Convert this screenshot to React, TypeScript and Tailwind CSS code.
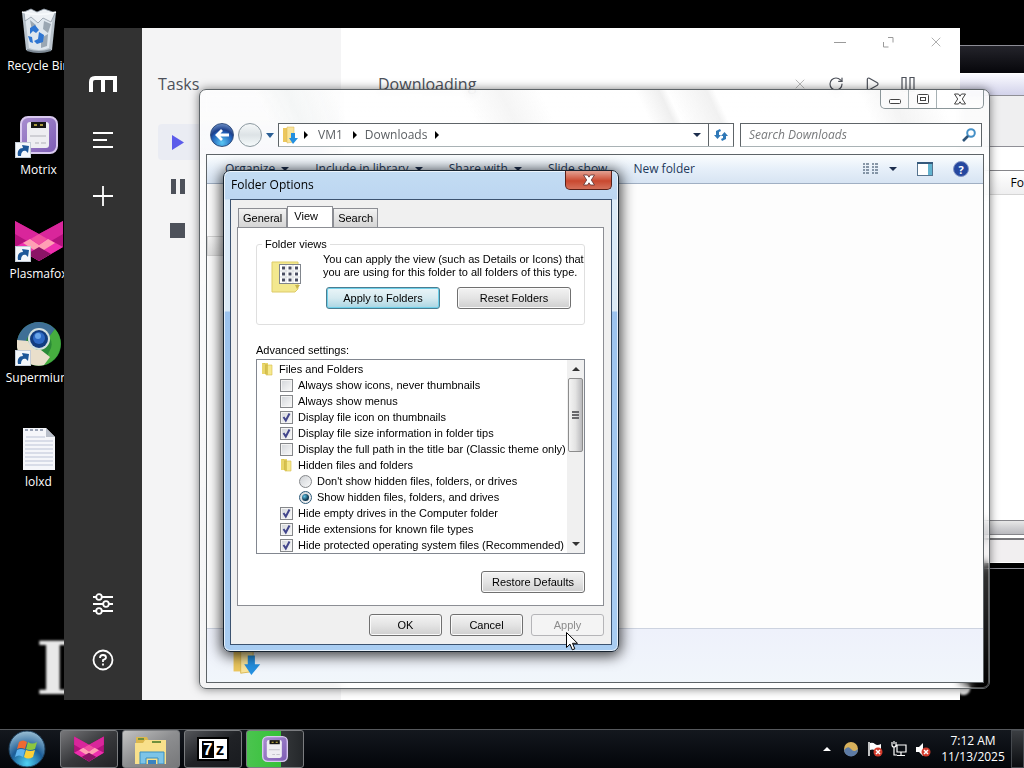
import { useState } from "react";
import type { ReactNode } from "react";
import { Play, RotateCw, X } from "lucide-react";

function ShortcutArrow() {
  return (
    <svg viewBox="0 0 16 16" className="absolute bottom-0 left-[15px] w-4 h-4">
      <rect x="0.5" y="0.5" width="15" height="15" fill="#f4f7fb" stroke="#c5cdd8" />
      <path d="M3 14C2 9 4 6 8 6L7 3l7 1-1 7-2-2C8 8 6 10 6 14z" fill="#1d5799" />
    </svg>
  );
}

function BinIcon() {
  return (
    <svg viewBox="0 0 38 46" className="w-[38px] h-[46px]">
      <path d="M2 4 6 42q13 5 26 0l4-38z" fill="#b9c3cc" />
      <path d="M5 8 9 40q10 4 20 0l4-32z" fill="#dfe7ee" />
      <path d="M4 4 11 1l6 3 7-3 6 2 5 2-4 9-8-4-5 5-7-6-6 4z" fill="#edf1f5" stroke="#8f9ba6" strokeWidth="0.8" />
      <path d="m24 13 7 3-3 9-5-4zM10 12l6 5-4 6zM21 30l7-4-1 12-6 2z" fill="#9aa7b3" />
      <path d="m10 20 5-3 4 5-3 3-3-2-3 3zM19 24l5 3-1 7-6 2-3-3 4-2zM8 28l4 1 1 6-3-1z" fill="#2f76d2" />
      <path d="M2 4q17 5 34 0" fill="none" stroke="#f7fafc" strokeWidth="1.5" />
      <path d="M7 42q12 4 24 0" fill="none" stroke="#7d8994" strokeWidth="2" />
    </svg>
  );
}

function MotrixIcon({ className }: { className: string }) {
  return (
    <svg viewBox="0 0 38 38" className={className}>
      <defs>
        <linearGradient id="mx" x1="0" y1="0" x2="1" y2="1">
          <stop offset="0" stopColor="#a98fd0" />
          <stop offset="1" stopColor="#7d5cb4" />
        </linearGradient>
      </defs>
      <rect x="1" y="1" width="36" height="36" rx="7" fill="url(#mx)" stroke="#d9c9ef" strokeWidth="2" />
      <rect x="7" y="6" width="22" height="26" rx="3" fill="#eeeef2" />
      <rect x="11" y="6" width="15" height="6" fill="#151515" />
      <path d="M14 9h3M20 9h3" stroke="#d9c34a" strokeWidth="1.5" />
      <path d="M10 20h16M15 27h4M21 27h5" stroke="#c5c5cc" strokeWidth="1.5" />
    </svg>
  );
}

function FoxIcon({ className }: { className: string }) {
  return (
    <svg viewBox="0 0 48 42" className={className}>
      <path d="M0 1 24 14 48 1v26L24 41 0 27z" fill="#b3127d" />
      <path d="M0 1 24 14 12 21 0 14zM48 1 24 14l12 7 12-7z" fill="#d9269b" />
      <path d="M0 27 24 14l24 13-24 14z" fill="#ee2fae" />
      <path d="m8 23 7-4 9 6 9-6 7 4-16 10z" fill="#ff9fb4" />
      <path d="m16 19 8-5 8 5-8 6z" fill="#f0509f" />
      <path d="M12 34 24 27l12 7-12 7z" fill="#8b1466" />
    </svg>
  );
}

function SupermiumIcon() {
  return (
    <svg viewBox="0 0 44 44" className="w-11 h-11">
      <circle cx="22" cy="22" r="22" fill="#2b8a37" />
      <path d="M0 20A22 22 0 0 1 38 7L32 15a13 13 0 0 0-23 4z" fill="#3f6f96" />
      <path d="M38 7a22 22 0 0 1-11 36l5-13a12 12 0 0 0 0-15z" fill="#46ad3f" />
      <path d="M0 18A22 22 0 0 0 27 43l6-8-9-7q-8 1-13-9z" fill="#e9dfcb" />
      <circle cx="22" cy="17" r="11" fill="#d4e0df" />
      <circle cx="22" cy="17" r="9" fill="#123c80" />
      <circle cx="22" cy="16" r="6" fill="#2d68c4" />
      <circle cx="21" cy="14" r="3" fill="#6aa5ea" />
    </svg>
  );
}

function TextFileIcon() {
  return (
    <svg viewBox="0 0 32 42" className="w-8 h-[42px]">
      <path d="M0 0h23l9 9v33H0z" fill="#f5f6fa" />
      <path d="M3 9h19M2 13h28M2 17h28M2 21h28M2 25h28M2 29h28M2 33h28M2 37h28" stroke="#bcc3d6" strokeWidth="1" />
      <path d="M23 0v9h9z" fill="#b9bfca" />
      <path d="M2 2h19" stroke="#9aa3b5" strokeWidth="2" strokeDasharray="3 2" />
    </svg>
  );
}

function DesktopIcon({ label, shortcut, children }: { label: string; shortcut?: boolean; children: ReactNode }) {
  return (
    <button className="w-[77px] h-[104px] flex flex-col items-center">
      <span className="relative w-full h-[50px] flex justify-center items-end">
        {children}
        {shortcut && <ShortcutArrow />}
      </span>
      <span className="pt-1 text-[12px] leading-[16px] text-white whitespace-nowrap">{label}</span>
    </button>
  );
}

function FolderGlyph({ className }: { className: string }) {
  return (
    <svg viewBox="0 0 12 14" className={className}>
      <path d="M1 1h6v11H1z" fill="#e9d66c" />
      <path d="M5 3h6v10H5z" fill="#f6e98e" stroke="#d6bd4c" strokeWidth="0.6" />
      <path d="M1 1h3v11l3 1V3z" fill="#cdb640" opacity="0.7" />
    </svg>
  );
}

function DownloadFolder({ className }: { className: string }) {
  return (
    <svg viewBox="0 0 16 18" className={className}>
      <path d="M1 2h8v14H1z" fill="#ecc75e" />
      <path d="M5 1h7v15l-7 1z" fill="#f9e49b" stroke="#d9b44d" strokeWidth="0.5" />
      <path d="M9 7h4v5h3l-5 6-4-6h2z" fill="#2590e0" />
    </svg>
  );
}

function Caret() {
  return <span className="w-0 h-0 border-x-4 border-x-transparent border-t-4 border-t-[#1c2d4d]" />;
}

function BackgroundWindow() {
  return (
    <section className="absolute left-[66%] right-0 top-[45px] h-[524px] flex flex-col border border-r-0 border-[#8d8d95] bg-[#08080c]">
      <div className="h-[27px] bg-linear-to-b from-[#24242b] to-[#07070b]" />
      <div className="h-[22px] border-t border-white bg-linear-to-b from-[#fafaff] to-[#d2d2ea]" />
      <div className="h-[52px] border-y border-[#8f8f96] bg-[#efeff0]" />
      <div className="h-6 bg-white border-b border-[#85858a]" />
      <div className="h-6 flex justify-end items-center bg-linear-to-b from-white to-[#efeff0] border-b border-[#d5d5d5] text-[12px] text-black">
        <span>Fo</span>
      </div>
      <div className="flex-1 bg-white" />
      <div className="h-[14px] border-t border-[#85858a] bg-linear-to-b from-[#e8e8e8] to-[#b9b9be]" />
      <div className="h-1 border-t border-[#85858a] bg-white" />
      <div className="h-6 border-t-2 border-[#77777b] bg-[#f1eff0]" />
      <div className="h-[6px] bg-black border-t border-white" />
    </section>
  );
}

function MotrixWindow() {
  return (
    <section className="absolute left-16 right-16 top-7 bottom-[29px] flex bg-white">
      <aside className="w-[78px] shrink-0 flex flex-col items-center justify-between pt-[46px] pb-7 bg-[#323232] text-white">
        <div className="flex flex-col items-center gap-8">
          <svg viewBox="0 0 28 16" className="w-7 h-[22px]" fill="none" stroke="white" strokeWidth="4">
            <path d="M2 15V5q0-4 4-4h20v14M14 1v14" />
          </svg>
          <button aria-label="Tasks" className="w-6 h-6">
            <svg viewBox="0 0 24 24" fill="none" stroke="currentColor" strokeWidth="1.8"><path d="M2 5h20M2 12h14M2 19h20" /></svg>
          </button>
          <button aria-label="Add task" className="w-6 h-6">
            <svg viewBox="0 0 24 24" fill="none" stroke="currentColor" strokeWidth="1.8"><path d="M12 2v20M2 12h20" /></svg>
          </button>
        </div>
        <div className="flex flex-col items-center gap-8">
          <button aria-label="Preferences" className="w-6 h-6">
            <svg viewBox="0 0 24 24" fill="none" stroke="currentColor" strokeWidth="1.8">
              <path d="M2 5h3M11 5h11M2 12h10M18 12h4M2 19h3M11 19h11" />
              <circle cx="8" cy="5" r="2.8" />
              <circle cx="15" cy="12" r="2.8" />
              <circle cx="8" cy="19" r="2.8" />
            </svg>
          </button>
          <button aria-label="Help" className="w-6 h-6">
            <svg viewBox="0 0 24 24" fill="none" stroke="currentColor" strokeWidth="1.8">
              <circle cx="12" cy="12" r="9.5" />
              <path d="M9 10q0-3 3-3t3 2.5Q15 11 12 12v2M12 15.500v2" />
            </svg>
          </button>
        </div>
      </aside>
      <nav className="w-[199px] shrink-0 px-4 pt-11 bg-[#f4f4f5] text-[#4d515a]">
        <h2 className="text-[16px] leading-6">Tasks</h2>
        <ul className="mt-7 flex flex-col gap-2">
          <li className="flex">
            <button aria-label="Downloading" className="w-full h-9 px-2 rounded bg-[#eaecf3] text-[#5b5bea]">
              <svg viewBox="0 0 24 24" className="w-6 h-6" fill="currentColor"><path d="M6 5v15l12-7.500z" /></svg>
            </button>
          </li>
          <li className="flex">
            <button aria-label="Waiting" className="w-full h-9 px-2">
              <svg viewBox="0 0 24 24" className="w-6 h-6" fill="currentColor"><path d="M5 5h5v15H5zM14 5h5v15h-5z" /></svg>
            </button>
          </li>
          <li className="flex">
            <button aria-label="Stopped" className="w-full h-9 px-2">
              <svg viewBox="0 0 24 24" className="w-6 h-6" fill="currentColor"><path d="M4 5h15v15H4z" /></svg>
            </button>
          </li>
        </ul>
      </nav>
      <main className="flex-1 text-[#4d515a]">
        <div className="h-7 flex justify-end text-[#9a9a9a]">
          <button aria-label="Minimize" className="w-12 flex justify-center items-center">
            <svg viewBox="0 0 12 12" className="w-3 h-3" stroke="currentColor"><path d="M0 6.500h12" /></svg>
          </button>
          <button aria-label="Maximize" className="w-12 flex justify-center items-center">
            <svg viewBox="0 0 12 12" className="w-3 h-3" stroke="currentColor" fill="none"><path d="M6 1.500h5v5M1.500 6v5h5" /></svg>
          </button>
          <button aria-label="Close" className="w-12 flex justify-center items-center">
            <X size={16} strokeWidth={1.2} />
          </button>
        </div>
        <div className="h-14 pl-[37px] pr-11 flex items-center justify-between">
          <h1 className="text-[16px] leading-6">Downloading</h1>
          <div className="flex gap-5">
            <button aria-label="Delete"><X size={16} strokeWidth={1.2} className="text-[#aaaaaa]" /></button>
            <button aria-label="Refresh"><RotateCw size={16} strokeWidth={1.8} /></button>
            <button aria-label="Resume all"><Play size={16} strokeWidth={1.8} /></button>
            <button aria-label="Pause all">
              <svg viewBox="0 0 16 16" className="w-4 h-4" fill="none" stroke="currentColor" strokeWidth="1.2"><path d="M2 1.500h4v14H2zM10 1.500h4v14h-4z" /></svg>
            </button>
          </div>
        </div>
      </main>
    </section>
  );
}

const commands = [
  { label: "Organize", menu: true },
  { label: "Include in library", menu: true },
  { label: "Share with", menu: true },
  { label: "Slide show", menu: false },
  { label: "New folder", menu: false },
];

function ExplorerWindow() {
  return (
    <section className="absolute left-[199px] right-[34px] top-[89px] bottom-10 pl-[6px] pr-[5px] pb-[5px] flex flex-col rounded-[7px] border border-[#5e6468] bg-linear-to-b from-white/75 via-white/50 to-white/0 backdrop-blur-[4px] shadow-[0_0_10px_rgba(0,0,0,0.5),inset_0_0_0_1px_rgba(255,255,255,0.3)]">
      <div className="h-[33px] shrink-0 flex justify-end items-start bg-[linear-gradient(65deg,transparent_8%,#f4f6f6_12%,transparent_18%,transparent_34%,#f5f5f5_39%,transparent_44%,transparent_56%,#efefef_59%,transparent_60%,#f1f1f1_65%,transparent_66%,transparent_84%,#f4f4f4_88%,transparent_94%)]">
        <div className="flex h-[19px] rounded-b-[5px] border border-t-0 border-[#8b9699] bg-white/40">
          <button aria-label="Minimize" className="w-7 flex justify-center items-center border-r border-[#a6b0b3]">
            <svg viewBox="0 0 12 12" className="w-3 h-3" fill="white" stroke="#444"><rect x="0.500" y="6.500" width="11" height="4" rx="1" /></svg>
          </button>
          <button aria-label="Maximize" className="w-7 flex justify-center items-center border-r border-[#a6b0b3]">
            <svg viewBox="0 0 12 12" className="w-3 h-3" fill="white" stroke="#444"><rect x="0.500" y="1.500" width="11" height="9" rx="1" /><rect x="3.500" y="4.500" width="5" height="3" /></svg>
          </button>
          <button aria-label="Close" className="w-[46px] flex justify-center items-center">
            <svg viewBox="0 0 14 12" className="w-[14px] h-3" fill="white" stroke="#444"><path d="M1.500 1h4L7 3.200 8.500 1h4L9.300 6l3.200 5h-4L7 8.800 5.500 11h-4l3.200-5z" /></svg>
          </button>
        </div>
      </div>
      <div className="h-[31px] shrink-0 flex items-start pl-1 pr-[2px]">
        <button aria-label="Back" className="w-6 h-6 rounded-full border border-[#324f7d] bg-[radial-gradient(circle_at_50%_85%,#59c8f5,#1f5bb5_50%,#1c3f8a_60%,#8fb2e3)] flex justify-center items-center">
          <svg viewBox="0 0 16 16" className="w-4 h-4" stroke="white" strokeWidth="2.800" fill="none"><path d="M15 8H3M8 3 3 8l5 5" /></svg>
        </button>
        <button aria-label="Forward" className="ml-1 w-6 h-6 rounded-full border border-[#8b989f] bg-linear-to-b from-[#f5f8f9] via-[#dde3e6] to-[#f5fafb]" />
        <button aria-label="Recent pages" className="w-4 h-6 flex justify-center items-center">
          <span className="w-0 h-0 border-x-4 border-x-transparent border-t-[5px] border-t-[#2b5f95]" />
        </button>
        <div className="flex-1 h-6 flex items-center bg-white/90 border border-[#5e6468] border-b-[#a9b2b5] text-[12px] text-[#5b5f63]">
          <DownloadFolder className="w-4 h-[18px] ml-[3px]" />
          <span className="ml-[6px] w-0 h-0 border-y-4 border-y-transparent border-l-4 border-l-black" />
          <a href="#vm1" className="ml-[10px]">VM1</a>
          <span className="ml-[10px] w-0 h-0 border-y-4 border-y-transparent border-l-4 border-l-black" />
          <a href="#downloads" className="ml-2">Downloads</a>
          <span className="ml-2 w-0 h-0 border-y-4 border-y-transparent border-l-4 border-l-black" />
          <button aria-label="Previous locations" className="ml-auto w-6 h-full flex justify-center items-center border-r border-[#5e6468]"><Caret /></button>
          <button aria-label="Refresh" className="w-6 h-full flex justify-center items-center">
            <svg viewBox="0 0 16 16" className="w-4 h-4" fill="#2f78b7">
              <path d="M7 2 3 4v4H1l3.500 4L8 8H6V5l2-1zM9 14l4-2V9h2l-3.500-4L8 9h2v2l-2 1z" />
            </svg>
          </button>
        </div>
        <label className="ml-[6px] w-[242px] h-6 flex items-center pl-2 pr-1 bg-white/90 border border-[#5e6468] border-b-[#a9b2b5]">
          <input aria-label="Search Downloads" placeholder="Search Downloads" className="flex-1 min-w-0 bg-transparent text-[12px] italic placeholder:text-[#77797b] outline-none" />
          <svg viewBox="0 0 16 16" className="w-4 h-4" fill="none">
            <circle cx="10" cy="6" r="3.800" stroke="#4590c7" strokeWidth="2" />
            <path d="m7 9-5 5" stroke="#2e5478" strokeWidth="2.600" />
          </svg>
        </label>
      </div>
      <div className="flex-1 flex flex-col border border-[#5e6468] bg-[#fdfdfd]">
        <div className="h-[29px] shrink-0 flex items-center pl-[18px] pr-[14px] text-[12px] text-[#1e395b] bg-linear-to-b from-[#fbfdfe] via-[#e6eff9] to-[#d7e4f3] border-b border-[#a0afc3]">
          <div className="flex gap-[26px]">
            {commands.map((c) => (
              <button key={c.label} className="flex items-center gap-[6px] whitespace-nowrap">
                {c.label}
                {c.menu && <Caret />}
              </button>
            ))}
          </div>
          <div className="ml-auto flex items-center gap-5">
            <button aria-label="Change your view" className="flex items-center gap-[10px]">
              <svg viewBox="0 0 16 12" className="w-4 h-3" stroke="#66788c" strokeWidth="1.500" strokeDasharray="2 1 3 3">
                <path d="M0 1h16M0 4h16M0 7h16M0 10h16" />
              </svg>
              <Caret />
            </button>
            <button aria-label="Preview pane">
              <svg viewBox="0 0 16 14" className="w-4 h-[14px]">
                <rect x="0.500" y="0.500" width="15" height="13" fill="white" stroke="#56748f" />
                <path d="M0 1h16" stroke="#35597c" strokeWidth="2" />
                <path d="M11 2h4v11h-4z" fill="#62b3cf" />
              </svg>
            </button>
            <button aria-label="Help" className="w-4 h-4 rounded-full border border-[#8294c4] bg-[#25479f] text-white text-[11px] leading-none font-bold">?</button>
          </div>
        </div>
        <div className="flex-1 pt-[52px]">
          <div className="w-5 h-5 border border-[#d5d5d5] bg-linear-to-b from-[#f8f8f8] to-[#e2e2e2]" />
        </div>
        <div className="h-[54px] shrink-0 pl-5 pt-[14px] border-t border-[#cdd3e0] bg-linear-to-b from-[#eef1fb] to-[#f1f6fb]">
          <DownloadFolder className="w-[38px] h-8" />
        </div>
      </div>
    </section>
  );
}

type Setting = { label: string; kind: "folder" | "check" | "radio"; indent: string; on?: boolean };

const settings: Setting[] = [
  { label: "Files and Folders", kind: "folder", indent: "pl-1" },
  { label: "Always show icons, never thumbnails", kind: "check", indent: "pl-[23px]" },
  { label: "Always show menus", kind: "check", indent: "pl-[23px]" },
  { label: "Display file icon on thumbnails", kind: "check", indent: "pl-[23px]", on: true },
  { label: "Display file size information in folder tips", kind: "check", indent: "pl-[23px]", on: true },
  { label: "Display the full path in the title bar (Classic theme only)", kind: "check", indent: "pl-[23px]" },
  { label: "Hidden files and folders", kind: "folder", indent: "pl-[23px]" },
  { label: "Don't show hidden files, folders, or drives", kind: "radio", indent: "pl-[42px]" },
  { label: "Show hidden files, folders, and drives", kind: "radio", indent: "pl-[42px]", on: true },
  { label: "Hide empty drives in the Computer folder", kind: "check", indent: "pl-[23px]", on: true },
  { label: "Hide extensions for known file types", kind: "check", indent: "pl-[23px]", on: true },
  { label: "Hide protected operating system files (Recommended)", kind: "check", indent: "pl-[23px]", on: true },
];

function SettingRow({ setting }: { setting: Setting }) {
  const { label, kind, indent, on } = setting;
  if (kind === "folder") {
    return (
      <li className={`${indent} h-4 flex items-center gap-[6px]`}>
        <FolderGlyph className="w-3 h-[14px]" />
        {label}
      </li>
    );
  }
  return (
    <li className={`${indent} h-4`}>
      <label className="h-4 flex items-center gap-[5px]">
        <span className="grid w-[13px] h-[13px]">
          {kind === "check" ? (
            <>
              <input type="checkbox" defaultChecked={on} className="peer appearance-none col-start-1 row-start-1 w-[13px] h-[13px] border border-[#85878a] bg-linear-to-br from-[#d3d6da] to-[#fafafa] shadow-[inset_0_0_0_1px_#f4f4f4]" />
              <svg viewBox="0 0 13 13" className="hidden peer-checked:block col-start-1 row-start-1 w-[13px] h-[13px] pointer-events-none" fill="none" stroke="#42468c" strokeWidth="2">
                <path d="m3.500 6 2.300 3.500L9.500 2.500" />
              </svg>
            </>
          ) : (
            <>
              <input type="radio" name="hidden-files" defaultChecked={on} className="peer appearance-none col-start-1 row-start-1 w-[13px] h-[13px] rounded-full border border-[#85878a] bg-linear-to-br from-[#cfd2d6] to-[#fafafa] checked:border-[#2d5a78]" />
              <span className="hidden peer-checked:block col-start-1 row-start-1 place-self-center w-[7px] h-[7px] rounded-full bg-[radial-gradient(circle_at_35%_35%,#5fc3e6,#123c55_60%)] pointer-events-none" />
            </>
          )}
        </span>
        {label}
      </label>
    </li>
  );
}

const buttonFace = "h-[22px] rounded-[3px] border border-[#707070] bg-linear-to-b from-[#f3f3f3] via-[#e4e4e4] to-[#cfcfcf] shadow-[inset_0_0_0_1px_#fafafa]";

function FolderOptions() {
  const [tab, setTab] = useState("View");
  return (
    <section
      role="dialog"
      aria-label="Folder Options"
      className="absolute left-[223px] top-[170px] w-[396px] px-[6px] pb-[6px] rounded-[7px] border border-[#17232f] bg-[linear-gradient(to_bottom,#c3dcf3_0px,#bcd6f1_28px,#dcebf8_29px,#dbeaf6_140px,#9cc3ee_141px,#a9cdf2_100%)] shadow-[0_2px_14px_2px_rgba(0,0,0,0.75),inset_0_0_0_1px_rgba(255,255,255,0.7)]"
    >
      <header className="h-7 flex justify-between items-start">
        <h2 className="pl-[1px] text-[12px] leading-7 text-black">Folder Options</h2>
        <button aria-label="Close" className="w-[47px] h-[19px] flex justify-center items-center rounded-b-[5px] border border-t-0 border-[#5a2018] bg-linear-to-b from-[#e2a192] via-[#c9482f] to-[#d4705a] via-55%">
          <svg viewBox="0 0 14 12" className="w-[14px] h-3" fill="white" stroke="#5c3030" strokeWidth="0.800"><path d="M1.500 1h4L7 3.200 8.500 1h4L9.300 6l3.200 5h-4L7 8.800 5.500 11h-4l3.200-5z" /></svg>
        </button>
      </header>
      <div className="pl-[6px] pr-[7px] pt-[6px] pb-2 border border-[#3c5370] bg-[#f0f0f0] font-['Liberation_Sans',Arial,sans-serif] text-[11px] text-black">
        <div role="tablist" className="h-[21px] pl-[1px] flex items-end">
          {["General", "View", "Search"].map((name) => (
            <button
              key={name}
              role="tab"
              aria-selected={tab === name}
              onClick={() => setTab(name)}
              className={
                tab === name
                  ? "w-[46px] h-[21px] pb-[2px] pr-2 bg-white border border-b-0 border-[#8c8e94]"
                  : "h-[19px] px-1 bg-linear-to-b from-[#f2f2f2] to-[#d5d5d5] border border-b-0 border-[#8c8e94]"
              }
            >
              {name}
            </button>
          ))}
        </div>
        <div role="tabpanel" className="px-[18px] pt-[9px] pb-3 bg-white border border-[#8c8e94]">
          <fieldset className="h-[88px] min-w-0 px-3 border border-[#dfdfdf] rounded-[3px]">
            <legend className="-ml-[7px] px-[3px] leading-[14px]">Folder views</legend>
            <div className="flex pt-[2px]">
              <svg viewBox="0 0 34 36" className="w-[34px] h-9 mt-[6px] ml-[2px] shrink-0">
                <path d="M1 3h15v30H1z" fill="#eedf7c" />
                <path d="M1 3h26v27l-3 3H1z" fill="#f3e88f" stroke="#ddcb68" />
                <rect x="8.500" y="5.500" width="21" height="19" fill="white" stroke="#81868d" />
                <path d="M11 9h17M11 15h17M11 21h17" stroke="#4b4e62" strokeWidth="3" strokeDasharray="3 3.500" />
                <path d="M15 6v18M22 6v18M9 12h20M9 18h20" stroke="#c9ccd1" strokeWidth="0.700" />
                <path d="M24 26h5l-3 4z" fill="#c8b54c" />
              </svg>
              <div className="ml-[18px]">
                <p className="leading-[13px] whitespace-nowrap">
                  You can apply the view (such as Details or Icons) that
                  <br />
                  you are using for this folder to all folders of this type.
                </p>
                <div className="mt-2 pl-[3px] flex gap-[17px]">
                  <button className="w-[114px] h-[22px] shrink-0 rounded-[3px] border border-[#4b7d90] bg-linear-to-b from-[#eaf5f8] via-[#d5eaf0] to-[#a9d5e2] shadow-[inset_0_0_0_1px_#6fd0ea]">Apply to Folders</button>
                  <button className={`${buttonFace} w-[114px] shrink-0`}>Reset Folders</button>
                </div>
              </div>
            </div>
          </fieldset>
          <h3 className="mt-[18px] leading-[14px]">Advanced settings:</h3>
          <div className="mt-[2px] h-[195px] flex overflow-hidden border border-[#828790]">
            <ul className="flex-1 pt-[1px] whitespace-nowrap">
              {settings.map((s) => (
                <SettingRow key={s.label} setting={s} />
              ))}
            </ul>
            <div className="w-[17px] flex flex-col items-center bg-[#f0f0f0]">
              <button aria-label="Scroll up" className="w-full h-[18px] flex justify-center items-center">
                <span className="w-0 h-0 border-x-4 border-x-transparent border-b-4 border-b-[#333]" />
              </button>
              <div className="w-[15px] h-[74px] flex flex-col items-center justify-center gap-[1px] rounded-[2px] border border-[#8c8c8c] bg-linear-to-r from-[#f4f4f4] via-[#e3e3e3] to-[#b9b9bc]">
                <span className="w-[7px] h-[2px] bg-[#68686c]" />
                <span className="w-[7px] h-[2px] bg-[#68686c]" />
                <span className="w-[7px] h-[2px] bg-[#68686c]" />
              </div>
              <button aria-label="Scroll down" className="mt-auto w-full h-[18px] flex justify-center items-center">
                <span className="w-0 h-0 border-x-4 border-x-transparent border-t-4 border-t-[#333]" />
              </button>
            </div>
          </div>
          <div className="mt-[17px] flex justify-end">
            <button className={`${buttonFace} w-[104px]`}>Restore Defaults</button>
          </div>
        </div>
        <div className="mt-2 flex justify-end gap-2">
          <button className={`${buttonFace} w-[73px]`}>OK</button>
          <button className={`${buttonFace} w-[73px]`}>Cancel</button>
          <button disabled className="w-[73px] h-[22px] rounded-[3px] border border-[#b5b5b8] bg-[#f4f4f4] text-[#8c8c8c]">Apply</button>
        </div>
      </div>
    </section>
  );
}

const taskButton = "w-[58px] h-[38px] flex justify-center items-center rounded-[3px] border border-[#7b7d80]";

function Taskbar() {
  return (
    <footer className="h-[39px] shrink-0 flex items-start border-t border-[#55585c] bg-linear-to-b from-[#14181e] to-[#04060a]">
      <button aria-label="Start" className="w-[60px] h-[38px] pl-2">
        <svg viewBox="0 0 38 38" className="w-[38px] h-[38px]">
          <defs>
            <radialGradient id="orb" cx="0.5" cy="0.9" r="0.9">
              <stop offset="0" stopColor="#4fd3f4" />
              <stop offset="0.5" stopColor="#1c5d97" />
              <stop offset="1" stopColor="#9cc0d4" />
            </radialGradient>
          </defs>
          <circle cx="19" cy="19" r="18" fill="url(#orb)" stroke="#1d3f5c" />
          <path d="M11 12q4-3 8 0l-2 7q-4-2-8 0z" fill="#ee6a32" />
          <path d="M20 12q4 3 9 0l-2 7q-5 2-9 0z" fill="#8cc63f" />
          <path d="M9 20q4-2 8 0l-2 7q-4-3-8 0z" fill="#5fb4ee" />
          <path d="M18 20q4 2 9 0l-2 7q-5 3-9 0z" fill="#fcd038" />
        </svg>
      </button>
      <div className="flex gap-1">
        <button aria-label="Plasmafox" className={`${taskButton} bg-linear-to-br from-[#77777a] via-[#38393c] to-[#222326]`}>
          <FoxIcon className="w-[34px] h-[26px]" />
        </button>
        <button aria-label="Windows Explorer" className={`${taskButton} bg-linear-to-br from-[#c3c3c3] via-[#8d8e90] to-[#77787a]`}>
          <svg viewBox="0 0 34 30" className="w-[34px] h-[30px]">
            <path d="M2 3h11l2 4h16v22H2z" fill="#dcb84e" />
            <path d="M1 9h8l2-3h21v24H1z" fill="#f8e08b" />
            <path d="M4 5h6M18 8h9" stroke="#6f8f3d" strokeWidth="2" />
            <path d="M6 30V18h24v12h-6v-6H12v6z" fill="#7cc4e8" stroke="#3a8fc0" />
            <path d="M14 30v-4h8v4" fill="#3b83c0" />
          </svg>
        </button>
        <button aria-label="7-Zip" className={`${taskButton} bg-linear-to-br from-[#55575b] via-[#202226] to-[#191b1f]`}>
          <span className="w-8 h-6 border-2 border-black bg-white flex items-center justify-center gap-[2px] font-['Liberation_Sans',sans-serif] font-bold leading-none">
            <span className="w-3 bg-black text-white text-[17px]">7</span>
            <span className="text-black text-[17px]">z</span>
          </span>
        </button>
        <button aria-label="Motrix" className={`${taskButton} bg-[linear-gradient(to_right,#4bc44f_0%,#35c238_60%,#35383b_61%,#24272a_100%)]`}>
          <MotrixIcon className="w-[26px] h-[26px]" />
        </button>
      </div>
      <div className="ml-auto h-full flex items-center text-white">
        <div className="flex items-center gap-2 pr-1">
          <button aria-label="Show hidden icons" className="w-4 flex justify-center">
            <span className="w-0 h-0 border-x-4 border-x-transparent border-b-4 border-b-white" />
          </button>
          <svg viewBox="0 0 16 16" className="w-4 h-4">
            <circle cx="8" cy="8" r="7" fill="#d8b15b" />
            <path d="M1 9q4-5 7-1t7 0a7 7 0 0 1-14 1z" fill="#5d7ba5" />
          </svg>
          <svg viewBox="0 0 16 16" className="w-4 h-4">
            <path d="M2 1v14" stroke="white" strokeWidth="1.500" />
            <path d="M3 2q3-1 5 1t6 0v6q-3 1-6 0T3 9z" fill="white" />
            <circle cx="11" cy="11" r="4.500" fill="#d43b2c" />
            <path d="m9 9 4 4m0-4-4 4" stroke="white" strokeWidth="1.500" />
          </svg>
          <svg viewBox="0 0 16 16" className="w-4 h-4" fill="none" stroke="white" strokeWidth="1.200">
            <path d="M6 4h9v7H6zM10 11v3M6 14.500h8M3 6v8h3M1 1v3q0 2 2 2t2-2V1M3 0v3" />
          </svg>
          <svg viewBox="0 0 16 16" className="w-4 h-4">
            <path d="M1 6h3l4-4v13l-4-4H1z" fill="white" />
            <circle cx="11" cy="11" r="4.500" fill="#d43b2c" />
            <path d="m9 9 4 4m0-4-4 4" stroke="white" strokeWidth="1.500" />
          </svg>
        </div>
        <time className="w-[76px] text-center text-[12px] leading-[16px]">
          7:12 AM
          <br />
          11/13/2025
        </time>
        <button aria-label="Show desktop" className="w-[13px] h-full border border-[#45494e] bg-linear-to-b from-[#3b3e42] to-[#0b0d10]" />
      </div>
    </footer>
  );
}

export default function App() {
  return (
    <div className="h-screen flex flex-col overflow-hidden bg-black font-['Open_Sans','Noto_Sans',sans-serif]">
      <div className="relative flex-1 min-h-0">
        <div className="flex flex-col pt-1">
          <DesktopIcon label="Recycle Bin"><BinIcon /></DesktopIcon>
          <DesktopIcon label="Motrix" shortcut><MotrixIcon className="w-[38px] h-[38px] mb-1" /></DesktopIcon>
          <DesktopIcon label="Plasmafox" shortcut><FoxIcon className="w-12 h-[42px]" /></DesktopIcon>
          <DesktopIcon label="Supermium" shortcut><SupermiumIcon /></DesktopIcon>
          <DesktopIcon label="lolxd"><TextFileIcon /></DesktopIcon>
        </div>
        <div className="absolute left-9 right-12 bottom-6 flex justify-between font-['DejaVu_Serif',serif] font-bold text-[72px] leading-[72px] text-[#e8e8e8] blur-[1px]">
          <span>I</span>
          <span>.</span>
        </div>
        <BackgroundWindow />
        <MotrixWindow />
        <ExplorerWindow />
        <FolderOptions />
        <svg viewBox="0 0 12 19" className="absolute left-[566px] top-[632px] w-3 h-[19px]">
          <path d="M0.500 0.500v15l3.500-3.300 2.300 5.600 2.500-1-2.300-5.500h5z" fill="white" stroke="black" />
        </svg>
      </div>
      <Taskbar />
    </div>
  );
}
